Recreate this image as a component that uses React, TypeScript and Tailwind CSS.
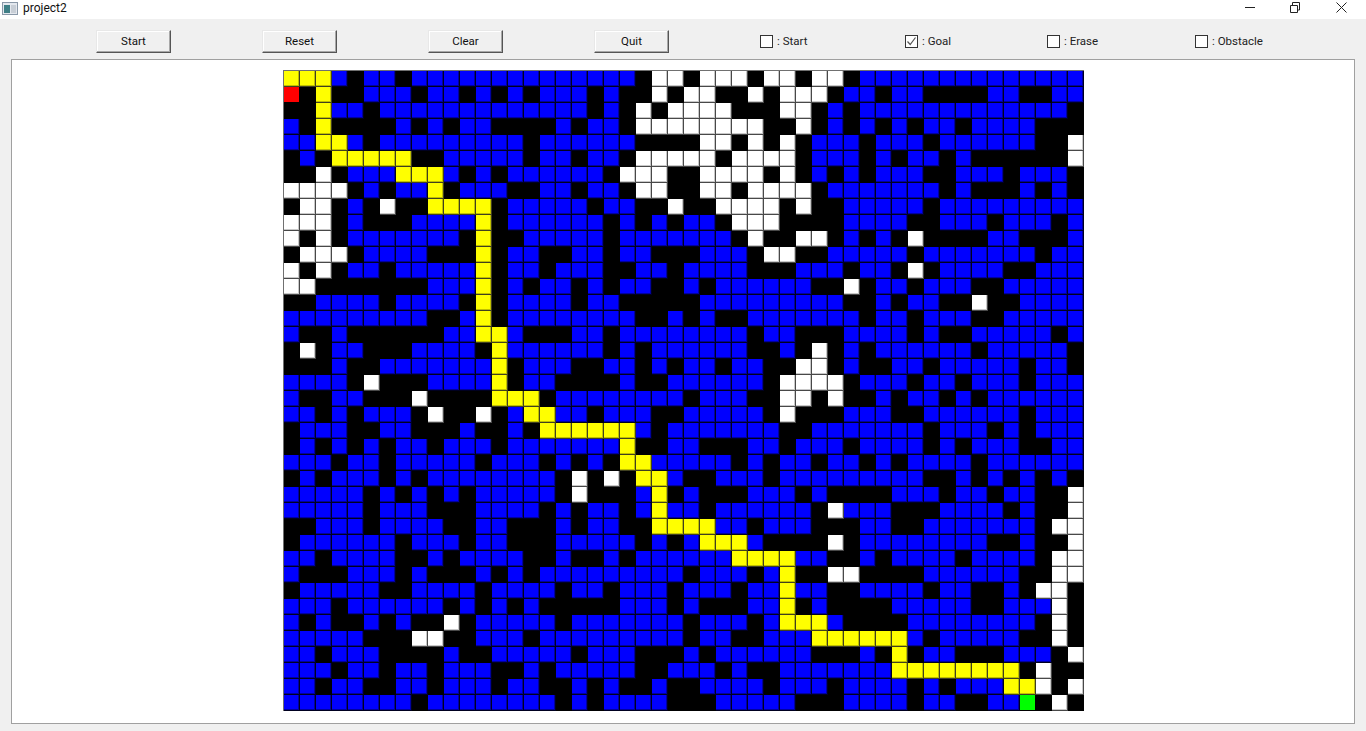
const ROWS = [
  'YYYB.BB.BBBBBBBBBBBBBB.WW.WWW.WW.WW.BBBBBBBBBBBBBB',
  'R.Y..BBB.BB.B.B.BBB.B..W.WW..W.WWW.BB.BB....BB..BB',
  '..YBB.BBBBBBBBBBBBB.B.W.WWWW...WW.B.BBBBBBBBBBBBB.',
  'B.Y....B.B.BB....B.BB.WWWWWWWW..W.B.B.B.BB.BBBB...',
  'BBYYB.BBBBBBBBB.BBBBBB....WW.W.W.BBB.BBB.BBBBBB..W',
  '.B.YYYYY..BBBBB.BB.BB.WWWWW.WWWW.BBB.B.BB.B......W',
  '..W.BBBYYYB.B.BBBBBB.WWW..WWWW.W.B.B.BBB..BBB.BBB.',
  'WWWW.B.BBY.BBB..BB.BB.WW..WW.WWWW.BBBBBBB.B...B.B.',
  '.WW.B.W..YYYY.BBBBB.BB..W..WWWW.W..BBBBB.BBBBBBBBB',
  'WWW.B...BBBBY.BBBBBB.B.B.BB.WWW....BBBB..BBB.BBB.B',
  'W.W.BBBBBBB.Y..BBBBB.BBBBBBB.W..WW.B.B.W....BB...B',
  '.WWW.BBBB...Y.BB..BB.BB...BBB.WW..BBBBB.BBBBBBB.BB',
  'W.W.BB.BBBBBY.BB.BBB..BB.BBBB...BBB.BB.W.BBBB..BBB',
  'WW.......BBBY.B.BB.B.BB..B.BBBBBB..W.BB.BBB..BBBBB',
  '..BBBB.BBBB.Y.BBBB.BB.....BBBBBBBBB..B.BB..W..BBBB',
  'BBBBBBBBB..BY.BBBBBBBB..B.B..BBBBBBB.BB.BBB..BBBBB',
  'B..B......BBYYB...BB.BBBBBBBB.BB...BBBB.B..BBBBB.B',
  '.W.BB...BBBB.YBBBBBB.B.BBBBBB..B.W.B.BBBBBB.BBBBB.',
  '...B..BBBBBBBY.BBB..BB.B.BB.BB..WW.B..BB.BBBBB.BB.',
  'BBBB.W...BBBBY.BB....B..BBBBBB.WWWW.BBB.BB.BBB.BBB',
  'B..BB...W....YYY.BBBBBBBB.BBB..WW.W..B.BB.B.BBBBBB',
  'BB.B.BBB.W..W.BYYBB.BBB..BBBBB.W...BBB..BBBBBB.BBB',
  '.BBB..BB...B..B.YYYYYYB.BBBBBBB..BBBBBBB.BBB.B.BBB',
  '.B.B.B.BB.BBB.BBBBBBBY..BB...BB.BBB.BBBB.B.BBB..BB',
  'BBB.BB.BBBBB.BBB.B.B.YYBBBBB.B.BB.BB.B.BBBB.BBBBBB',
  '.B.BBB.B.BBBBBBBB.W.W.YYB..BBB.BBBBBBBBB..B.B.B.B.',
  'BBBBB.B.B.B.BBBBB.W...BY.B...BBB.B....BBB.BB.BB..W',
  'BBBBB.BBB...BBBB.B.BB.BYBB.BBBBBB.WBBB...BBBB.B..W',
  '..BBB.BBBB..BB...B.BB..YYYYBB.BBB...BB..BBBBBBB.WW',
  '.BBBBBB.BBB.BB...BBBBB.B.BYYYB....W.BBBBBBBB..B..W',
  'BB.BBBB..B.BBBB..B..B.BBBBBBYYYYBB..B.BBBB.BBBB.WW',
  'B...BBB.B...B.B.BBBBBBBBB.BBB.BY..WW....BBBBBB..WW',
  '.BBBBB..BBBB.BBBB.BB.BBB.BBB.BBYBB..BBBB.BB..B.WW.',
  'BBB.BBBBBB.B.B.B.....BBB.B...BBY.B....BBBBB..BBBW.',
  'B.B..B.B..W.BBBBB.BBBBBBB.BBB.BYYYB....BBBBBBBB.W.',
  'BBBBB...WW..BBB.BBBBBBBBB.BB..BBBYYYYYYB.BBBBB..W.',
  'BB.BBB....B..BBBBB.BBB...B.BBBBBB...B.Y.BB...BBB.W',
  'BBB.BB.BB.BBB..B.BBBBB..BBB.B..BBBBBBBYYYYYYYY.W..',
  'BB.BB..BB.BBB.BB..B.B..B..BBBB.BBB.BBBB.B.BBBYYW.W',
  'BBBBBBBB.BBBBBBBB.B.BBBB...BBBBB...BBBB.BB..BBG.W.',
];

// the lines in the shot are soft, so each cell gets a dimmer edge next to its border
const CELL: Record<string, string> = {
  '.': 'bg-black border-black',
  B: 'bg-[#0000ff] border-[#000020] shadow-[inset_-1px_-1px_0_#0000a0]',
  W: 'bg-white border-[#484848] shadow-[inset_-1px_-1px_0_#c8c8c8]',
  Y: 'bg-[#ffff00] border-[#404020] shadow-[inset_-1px_-1px_0_#c0c000]',
  R: 'bg-[#ff0000] border-black',
  G: 'bg-[#00ff00] border-black',
};

const BUTTONS = ['Start', 'Reset', 'Clear', 'Quit'];

const CHECKS = [
  { label: ': Start', checked: false, width: 'w-[145px]' },
  { label: ': Goal', checked: true, width: 'w-[142px]' },
  { label: ': Erase', checked: false, width: 'w-[148px]' },
  { label: ': Obstacle', checked: false, width: 'w-[100px]' },
];

function TitleBar() {
  return (
    <div className="flex h-[19px] items-center bg-white pl-[2px]">
      <svg width="16" height="13" viewBox="0 0 16 13" className="mb-[3px]">
        <rect x="0.5" y="0.5" width="15" height="12" fill="#e4e8ee" stroke="#8a98a8" />
        <rect x="2" y="3" width="6" height="8" fill="#3f7f86" />
        <rect x="9" y="3" width="5" height="8" fill="#c8ced6" />
      </svg>
      <span className="ml-[5px] mb-[3px] text-[12px] leading-none text-[#111]">project2</span>
      <div className="ml-auto flex items-center">
        <svg width="10" height="10" viewBox="0 0 10 10" className="mr-[35px] mb-[5px]">
          <path d="M0 5.5H10" stroke="#222" strokeWidth="1" />
        </svg>
        <svg width="10" height="11" viewBox="0 0 10 11" className="mr-[36px] mb-[5px]">
          <path d="M0.5 3.5H7.5V10.5H0.5ZM2.5 3V0.5H9.5V8H8" fill="none" stroke="#222" strokeWidth="1" />
        </svg>
        <svg width="11" height="11" viewBox="0 0 11 11" className="mr-[19px] mb-[5px]">
          <path d="M0.5 0.5L10.5 10.5M10.5 0.5L0.5 10.5" stroke="#222" strokeWidth="1" />
        </svg>
      </div>
    </div>
  );
}

function Toolbar() {
  return (
    <div className="flex h-[40px] items-start pl-[96px] pt-[11px]">
      {BUTTONS.map(b => (
        <div key={b} className="w-[166px] shrink-0">
          <button className="flex h-[23px] w-[75px] items-center justify-center border border-t-[#e8e8e8] border-l-[#e8e8e8] border-r-[#555] border-b-[#555] bg-[#f0f0f0] pt-[1px] text-[11.5px] text-[#111] shadow-[inset_-1px_-1px_0_#a8a8a8,inset_1px_1px_0_#fff]">
            {b}
          </button>
        </div>
      ))}
      {CHECKS.map(c => (
        <div key={c.label} className={`flex h-[23px] shrink-0 items-center ${c.width}`}>
          <span className="flex h-[13px] w-[13px] items-center justify-center border border-[#333] bg-white">
            {c.checked && (
              <svg width="11" height="11" viewBox="0 0 11 11">
                <path d="M1.5 5.5L4.2 8.5L9.5 1.5" fill="none" stroke="#555" strokeWidth="1.2" />
              </svg>
            )}
          </span>
          <span className="ml-[4px] pt-[1px] text-[11.5px] text-[#222]">{c.label}</span>
        </div>
      ))}
    </div>
  );
}

export default function App() {
  return (
    <div className="h-[731px] overflow-hidden bg-[#f0f0f0] font-['Roboto',sans-serif]">
      <TitleBar />
      <Toolbar />
      <div className="mx-[11px] flex h-[665px] justify-center border border-[#a0a0a0] bg-white pt-[10px]">
        <div className="h-[641px] w-[801px] border-t border-l border-[#707070]">
          {ROWS.map((row, y) => (
            <div key={y} className="flex h-[16px]">
              {row.split('').map((c, x) => (
                <div key={x} className={`h-[16px] w-[16px] border-r border-b ${CELL[c]}`} />
              ))}
            </div>
          ))}
        </div>
      </div>
    </div>
  );
}
